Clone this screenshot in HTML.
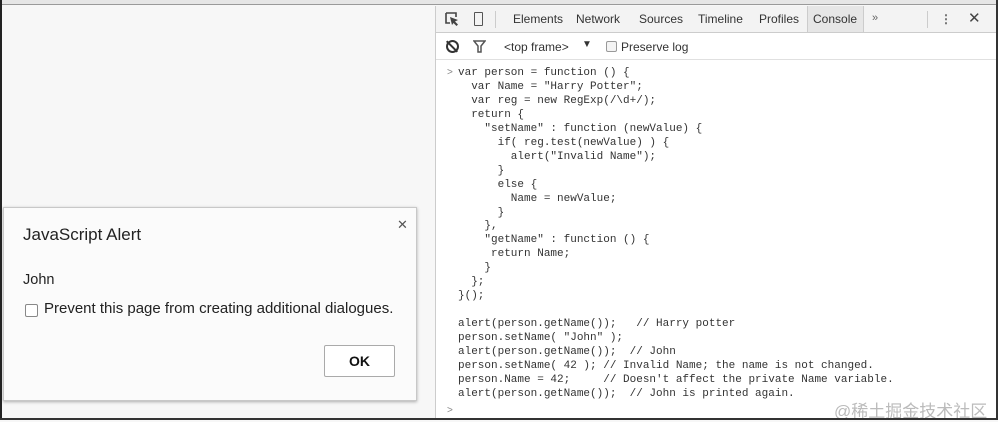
<!DOCTYPE html>
<html><head><meta charset="utf-8"><style>
*{margin:0;padding:0;box-sizing:border-box}
body{width:998px;height:420px;position:relative;overflow:hidden;background:#f7f7f7;font-family:"Liberation Sans",sans-serif}
.abs{position:absolute}
#top{left:0;top:0;width:998px;height:5px;background:#e6e6e6;border-bottom:1px solid #9a9a9a}
#lb{left:0;top:0;width:2px;height:420px;background:#222}
#rb{right:0;top:0;width:2px;height:420px;background:#333}
#bb{left:0;bottom:0;width:998px;height:2px;background:#333}
#dt{left:435px;top:6px;width:563px;height:414px;background:#fff;border-left:1px solid #ccc}
#tb1{left:0;top:0;width:563px;height:27px;background:#f3f3f3;border-bottom:1px solid #ccc;font-size:12px;color:#333}
#tb1 span{position:absolute;top:6px}
#tb2{left:0;top:27px;width:563px;height:27px;border-bottom:1px solid #e0e0e0;font-size:12px;color:#333}
pre{position:absolute;left:22px;top:61px;font-family:"Liberation Mono",monospace;font-size:11px;line-height:13.95px;color:#333}
#dlg{left:3px;top:207px;width:414px;height:194px;background:#fbfbfb;border:1px solid #c8c8c8;box-shadow:0 1px 3px rgba(0,0,0,.3)}
</style></head><body>
<div id="top" class="abs"></div>
<div id="dt" class="abs">
 <div id="tb1" class="abs">
  <svg class="abs" style="left:9px;top:6px" width="14" height="14" viewBox="0 0 14 14"><path d="M1 1h10v4M1 1v10h4" stroke="#444" stroke-width="1.6" fill="none"/><path d="M5 5l8 3-3 1.5 3 3-1.5 1.5-3-3L7 13z" fill="#444"/></svg>
  <div class="abs" style="left:38px;top:6px;width:9px;height:14px;border:1.5px solid #555;border-radius:1px"></div>
  <div class="abs" style="left:59px;top:5px;width:1px;height:17px;background:#ccc"></div>
  <span style="left:77px">Elements</span><span style="left:140px">Network</span><span style="left:203px">Sources</span><span style="left:262px">Timeline</span><span style="left:323px">Profiles</span>
  <div class="abs" style="left:371px;top:0;width:57px;height:26px;background:#e6e6e6;border-left:1px solid #ccc;border-right:1px solid #ccc"></div>
  <span style="left:377px">Console</span><span style="left:436px;font-size:11px;color:#666">»</span>
  <div class="abs" style="left:491px;top:5px;width:1px;height:17px;background:#ccc"></div>
  <span style="left:504px;font-weight:bold;color:#666">⋮</span>
  <span style="left:532px;font-size:15px;top:3px;color:#444">✕</span>
 </div>
 <div id="tb2" class="abs">
  <div class="abs" style="left:10px;top:7px;width:13px;height:13px;border:2px solid #333;border-radius:50%"></div>
  <div class="abs" style="left:15px;top:6px;width:2px;height:15px;background:#333;transform:rotate(-45deg)"></div>
  <svg class="abs" style="left:37px;top:7px" width="13" height="13" viewBox="0 0 13 13"><path d="M1 1h11L8 6v6H5V6z" fill="none" stroke="#555" stroke-width="1.5"/></svg>
  <span class="abs" style="left:68px;top:7px">&lt;top frame&gt;</span>
  <span class="abs" style="left:146px;top:6px;font-size:10px">▼</span>
  <div class="abs" style="left:170px;top:8px;width:11px;height:11px;border:1px solid #999;border-radius:2px;background:#f4f4f4"></div>
  <span class="abs" style="left:185px;top:7px">Preserve log</span>
 </div>
 <span class="abs" style="left:11px;top:61px;font-size:10px;color:#888">&gt;</span>
 <pre>var person = function () {
  var Name = "Harry Potter";
  var reg = new RegExp(/\d+/);
  return {
    "setName" : function (newValue) {
      if( reg.test(newValue) ) {
        alert("Invalid Name");
      }
      else {
        Name = newValue;
      }
    },
    "getName" : function () {
     return Name;
    }
  };
}();

alert(person.getName());   // Harry potter
person.setName( "John" );
alert(person.getName());  // John
person.setName( 42 ); // Invalid Name; the name is not changed.
person.Name = 42;     // Doesn't affect the private Name variable.
alert(person.getName());  // John is printed again.</pre>
 <span class="abs" style="left:11px;top:399px;font-size:10px;color:#888">&gt;</span>
 <span class="abs" style="left:398px;top:391px;font-size:17px;color:#bbb;font-family:'Liberation Sans','Noto Sans CJK SC',sans-serif">@稀土掘金技术社区</span>
</div>
<div id="dlg" class="abs">
 <span class="abs" style="left:19px;top:17px;font-size:17px;color:#222">JavaScript Alert</span>
 <span class="abs" style="left:393px;top:9px;font-size:13px;color:#555">✕</span>
 <span class="abs" style="left:19px;top:64px;font-size:14.5px;color:#222">John</span>
 <div class="abs" style="left:21px;top:96px;width:13px;height:13px;border:1px solid #888;border-radius:2px;background:#fff"></div>
 <span class="abs" style="left:40px;top:92px;font-size:15px;color:#222">Prevent this page from creating additional dialogues.</span>
 <div class="abs" style="left:320px;top:137px;width:71px;height:32px;border:1px solid #aaa;border-radius:2px;background:#fff;font-size:14px;font-weight:bold;text-align:center;line-height:30px;color:#111">OK</div>
</div>
<div id="lb" class="abs"></div><div id="rb" class="abs"></div><div id="bb" class="abs"></div>
</body></html>
